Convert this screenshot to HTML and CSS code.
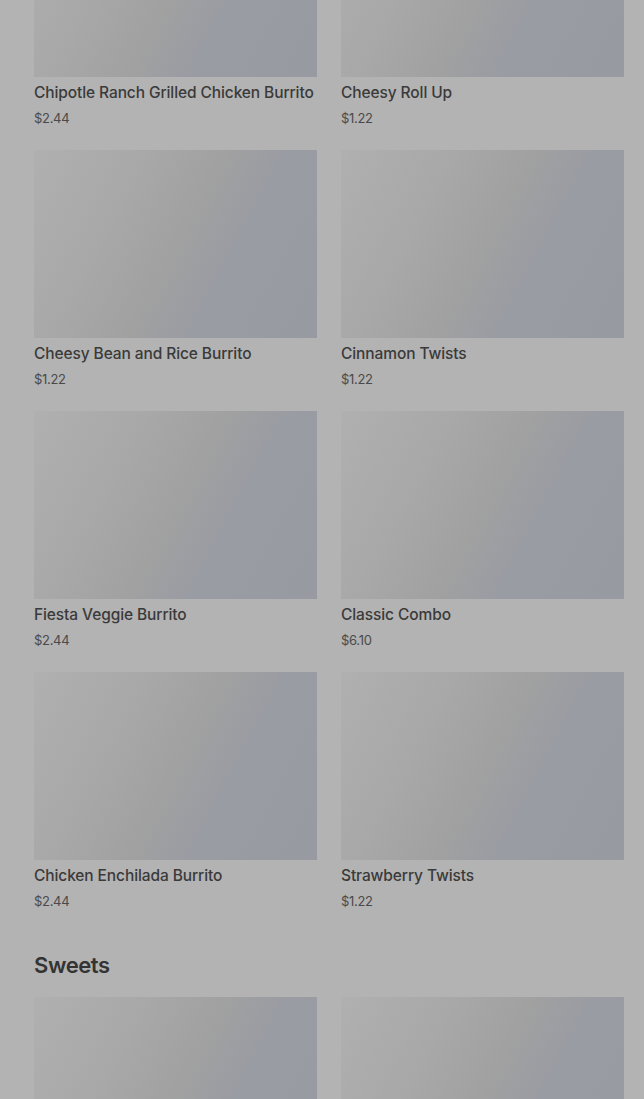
FILE: index.html
```html
<!DOCTYPE html>
<html lang="en">
<head>
<meta charset="utf-8">
<title>Menu</title>
<link rel="stylesheet" href="styles.css">
</head>
<body>
<main class="menu">
  <section class="section">
    <div class="grid">
      <div class="card"><div class="thumb"></div><div class="name">Chipotle Ranch Grilled Chicken Burrito</div><div class="price">$2.44</div></div>
      <div class="card"><div class="thumb"></div><div class="name">Cheesy Roll Up</div><div class="price">$1.22</div></div>
      <div class="card"><div class="thumb"></div><div class="name">Cheesy Bean and Rice Burrito</div><div class="price">$1.22</div></div>
      <div class="card"><div class="thumb"></div><div class="name">Cinnamon Twists</div><div class="price">$1.22</div></div>
      <div class="card"><div class="thumb"></div><div class="name">Fiesta Veggie Burrito</div><div class="price">$2.44</div></div>
      <div class="card"><div class="thumb"></div><div class="name">Classic Combo</div><div class="price">$6.10</div></div>
      <div class="card"><div class="thumb"></div><div class="name">Chicken Enchilada Burrito</div><div class="price">$2.44</div></div>
      <div class="card"><div class="thumb"></div><div class="name">Strawberry Twists</div><div class="price">$1.22</div></div>
    </div>
  </section>
  <section class="section">
    <h2 class="section-title">Sweets</h2>
    <div class="grid">
      <div class="card"><div class="thumb"></div></div>
      <div class="card"><div class="thumb"></div></div>
    </div>
  </section>
</main>
</body>
</html>
```
FILE: styles.css
```css
html, body {
  margin: 0;
  padding: 0;
  background: #b3b3b3;
  overflow: hidden;
}
body {
  font-family: Inter, "Liberation Sans", Arial, sans-serif;
  color: #333333;
}
.menu {
  margin-top: -111px;
  padding: 0 20px 0 34px;
}
.section + .section {
  margin-top: 38px;
}
.grid {
  display: grid;
  grid-template-columns: 283px 283px;
  column-gap: 24px;
  row-gap: 22px;
}
.thumb {
  height: 188px;
  background: linear-gradient(118deg, #b0b0b0 0%, #a8a8a8 30%, #a1a1a1 50%, #9a9ca3 66%, #989aa1 100%);
}
.name {
  margin-top: 4px;
  font-size: 15.5px;
  line-height: 24px;
  font-weight: 500;
  color: #3a3a3a;
  white-space: nowrap;
  letter-spacing: -0.1px;
}
.price {
  margin-top: 3px;
  font-size: 13px;
  line-height: 20px;
  color: #4a4a4a;
  letter-spacing: -0.3px;
}
.section-title {
  margin: 0 0 16px;
  font-size: 22px;
  line-height: 32px;
  font-weight: 600;
  color: #333333;
  letter-spacing: -0.4px;
}
```
